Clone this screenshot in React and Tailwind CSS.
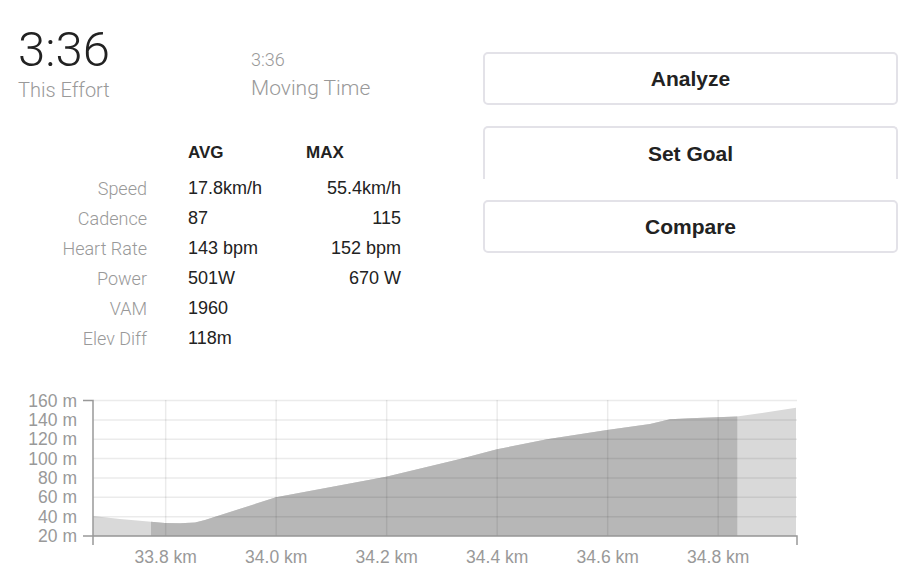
import React from 'react';

const font = { fontFamily: '"Liberation Sans", Arial, sans-serif' };
const light = { fontFamily: 'Roboto, "Liberation Sans", Arial, sans-serif' };

const rows = [
  { label: 'Speed', avg: '17.8km/h', max: '55.4km/h' },
  { label: 'Cadence', avg: '87', max: '115' },
  { label: 'Heart Rate', avg: '143 bpm', max: '152 bpm' },
  { label: 'Power', avg: '501W', max: '670 W' },
  { label: 'VAM', avg: '1960', max: '' },
  { label: 'Elev Diff', avg: '118m', max: '' },
];

const profile = [
  [93, 516], [120, 519], [151, 521.7], [165, 523], [180, 523.3], [195, 522.5], [205, 520],
  [276, 497.3], [386, 476.7], [460, 459], [497, 449.3], [547, 439.3], [607, 430],
  [650, 424], [670, 419.3], [690, 418.3], [737, 416.5], [760, 413.3], [796, 407.7],
];

const yTicks = [160, 140, 120, 100, 80, 60, 40, 20];
const xTicks = ['33.8', '34.0', '34.2', '34.4', '34.6', '34.8'];
const yFor = (m) => 536 - ((m - 20) / 20) * 19.35;
const xFor = (i) => 165.7 + i * 110.5;

const ElevationChart = () => {
  const area =
    'M93,536 ' + profile.map(([x, y]) => `L${x},${y}`).join(' ') + ' L796,536 Z';
  return (
    <svg width="920" height="186" viewBox="0 390 920 186" className="block">
      <defs>
        <clipPath id="effort">
          <rect x="151" y="380" width="586.3" height="160" />
        </clipPath>
      </defs>
      <path d={area} fill="#d9d9d9" />
      <path d={area} fill="#b7b7b7" clipPath="url(#effort)" />
      {yTicks.map((m) => (
        <line key={m} x1="93" x2="797" y1={yFor(m)} y2={yFor(m)} stroke="rgba(0,0,0,0.08)" strokeWidth="1.5" />
      ))}
      {xTicks.map((t, i) => (
        <line key={t} x1={xFor(i)} x2={xFor(i)} y1="400" y2="536" stroke="rgba(0,0,0,0.08)" strokeWidth="1.5" />
      ))}
      <path d="M83,400.5 H93 V545" fill="none" stroke="#999" strokeWidth="1.5" />
      <path d="M83,536 H797 V545" fill="none" stroke="#999" strokeWidth="1.5" />
      {yTicks.map((m) => (
        <text
          key={m}
          x="77"
          y={yFor(m) + 6}
          textAnchor="end"
          fontSize="17.5"
          fill="#999"
          style={font}
        >
          {m} m
        </text>
      ))}
      {xTicks.map((t, i) => (
        <text key={t} x={xFor(i)} y="563" textAnchor="middle" fontSize="17.5" fill="#999" style={font}>
          {t} km
        </text>
      ))}
    </svg>
  );
};

const ActionButton = ({ children, clipped }) => (
  <button
    className={`w-[415px] h-[53px] rounded-[5px] border-2 border-[#e3e2e8] bg-white text-[21px] font-bold text-[#222] ${
      clipped ? 'border-b-0 rounded-b-none' : ''
    }`}
    style={font}
  >
    {children}
  </button>
);

export default function App() {
  return (
    <div className="w-[920px] h-[576px] bg-white overflow-hidden" style={font}>
      <div className="flex h-[390px]">
        <div className="w-[483px] pl-[18px]">
          <div className="flex pt-[24px]">
            <div className="w-[233px]">
              <div className="text-[49px] leading-[52px] font-light text-[#222]" style={light}>
                3:36
              </div>
              <div className="mt-[2px] text-[20px] leading-[24px] font-light text-[#999]" style={light}>
                This Effort
              </div>
            </div>
            <div className="pt-[24px]">
              <div className="text-[18px] leading-[24px] font-light text-[#999]" style={light}>
                3:36
              </div>
              <div className="mt-[2px] text-[21px] leading-[28px] font-light text-[#999]" style={light}>
                Moving Time
              </div>
            </div>
          </div>
          <div className="mt-[39px]">
            <div className="flex h-[24px] items-center text-[17px] font-bold text-[#222]">
              <div className="w-[170px]" />
              <div className="w-[118px]">AVG</div>
              <div>MAX</div>
            </div>
            <div className="mt-[8px]">
              {rows.map((r) => (
                <div key={r.label} className="flex h-[30px] items-center">
                  <div
                    className="w-[129px] text-right text-[18px] font-light text-[#999]"
                    style={light}
                  >
                    {r.label}
                  </div>
                  <div className="w-[41px]" />
                  <div className="w-[130px] text-[18px] text-[#222]">{r.avg}</div>
                  <div className="w-[83px] text-right text-[18px] text-[#222]">{r.max}</div>
                </div>
              ))}
            </div>
          </div>
        </div>
        <div className="flex flex-col pt-[52px]">
          <ActionButton>Analyze</ActionButton>
          <div className="h-[21px]" />
          <ActionButton clipped>Set Goal</ActionButton>
          <div className="h-[21px]" />
          <ActionButton>Compare</ActionButton>
        </div>
      </div>
      <ElevationChart />
    </div>
  );
}
